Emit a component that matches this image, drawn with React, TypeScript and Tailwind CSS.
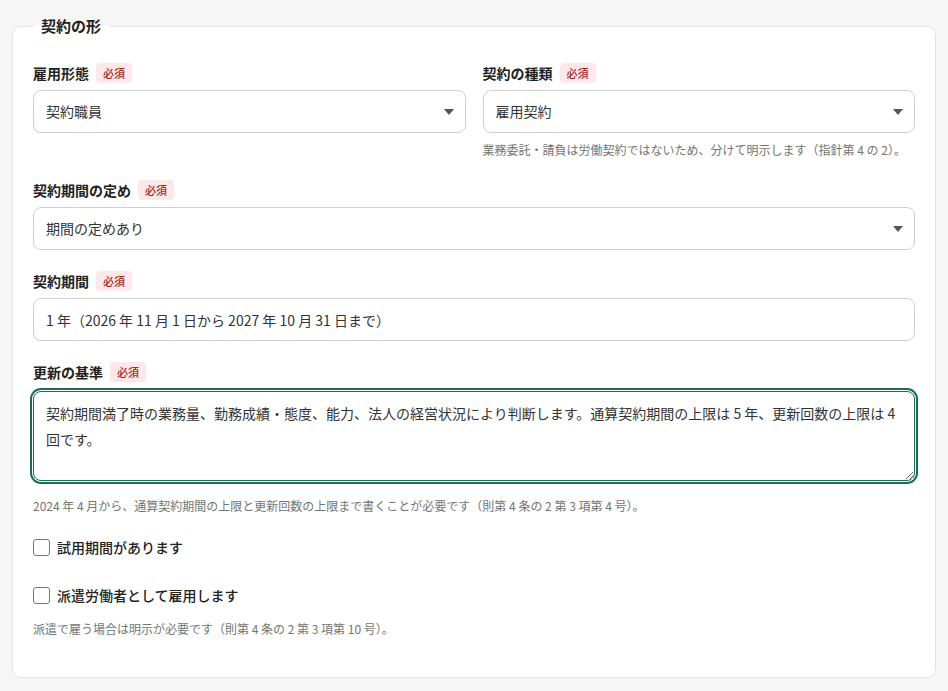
import { useState } from 'react';

const font = { fontFamily: '"Noto Sans CJK JP", "Noto Sans", sans-serif' };

function Required() {
  return (
    <span className="inline-flex h-5 items-center rounded-[4px] bg-[#fce8e8] px-[7px] text-[11px] font-medium text-[#a3262a]">
      必須
    </span>
  );
}

function Label({ text }: { text: string }) {
  return (
    <div className="flex h-5 items-center gap-[7px]">
      <span className="text-[14px] font-bold text-[#222]">{text}</span>
      <Required />
    </div>
  );
}

function Caret() {
  return (
    <svg
      className="pointer-events-none absolute right-[12px] top-1/2 -translate-y-1/2"
      width="10"
      height="6"
      viewBox="0 0 10 6"
    >
      <path d="M0 0 L10 0 L5 6 Z" fill="#555" />
    </svg>
  );
}

function Select({ value, options }: { value: string; options: string[] }) {
  const [v, setV] = useState(value);
  return (
    <div className="relative mt-[7px]">
      <select
        value={v}
        onChange={(e) => setV(e.target.value)}
        className="h-[43px] w-full appearance-none rounded-[8px] border border-[#cfd1cf] bg-white pl-[12px] pr-8 text-[14px] text-[#333] outline-none"
        style={font}
      >
        {options.map((o) => (
          <option key={o}>{o}</option>
        ))}
      </select>
      <Caret />
    </div>
  );
}

function Hint({ children, className = '' }: { children: React.ReactNode; className?: string }) {
  return <p className={`text-[12px] leading-[18px] text-[#737673] ${className}`}>{children}</p>;
}

function Check({ label }: { label: string }) {
  return (
    <label className="flex h-5 items-center gap-[7px]">
      <input
        type="checkbox"
        className="h-[17px] w-[17px] appearance-none rounded-[3px] border border-[#777] bg-white checked:bg-[#1a6e52]"
      />
      <span className="text-[14px] font-medium text-[#222]">{label}</span>
    </label>
  );
}

export default function App() {
  return (
    <div className="min-h-screen w-full bg-[#f5f6f5] px-3 pt-[15px] pb-3" style={font}>
      <fieldset className="rounded-[9px] border border-[#e2e4e2] bg-[#fefffe] px-5 pt-[26px] pb-[39px]">
        <legend className="px-2 text-[15px] font-bold leading-[22px] text-[#222]">契約の形</legend>

        <div className="flex flex-col gap-[21px]">
          {/* 雇用形態 / 契約の種類 */}
          <div className="grid grid-cols-2 gap-[17px]">
            <div>
              <Label text="雇用形態" />
              <Select value="契約職員" options={['正社員', '契約職員', 'パートタイム']} />
            </div>
            <div>
              <Label text="契約の種類" />
              <Select value="雇用契約" options={['雇用契約', '業務委託', '請負']} />
              <Hint className="mt-2">
                業務委託・請負は労働契約ではないため、分けて明示します（指針第 4 の 2）。
              </Hint>
            </div>
          </div>

          <div>
            <Label text="契約期間の定め" />
            <Select value="期間の定めあり" options={['期間の定めあり', '期間の定めなし']} />
          </div>

          <div>
            <Label text="契約期間" />
            <input
              defaultValue="1 年（2026 年 11 月 1 日から 2027 年 10 月 31 日まで）"
              className="mt-[7px] h-[43px] w-full rounded-[8px] border border-[#cfd1cf] bg-white px-[12px] text-[14px] text-[#333] outline-none"
              style={font}
            />
          </div>

          <div>
            <Label text="更新の基準" />
            <textarea
              defaultValue="契約期間満了時の業務量、勤務成績・態度、能力、法人の経営状況により判断します。通算契約期間の上限は 5 年、更新回数の上限は 4 回です。"
              className="mt-[9px] block h-[90px] w-full rounded-[8px] border border-[#1a6e52] bg-white px-[12px] py-[8px] text-[14px] leading-[26px] text-[#333] shadow-[0_0_0_1px_#fff,0_0_0_3px_#1a6e52] outline-none"
              style={font}
            />
            <Hint className="mt-[16px]">
              2024 年 4 月から、通算契約期間の上限と更新回数の上限まで書くことが必要です（則第 4 条の 2 第 3 項第 4 号）。
            </Hint>
          </div>

          <div className="mt-[1px]">
            <Check label="試用期間があります" />
          </div>

          <div className="mt-[7px]">
            <Check label="派遣労働者として雇用します" />
            <Hint className="mt-[15px]">派遣で雇う場合は明示が必要です（則第 4 条の 2 第 3 項第 10 号）。</Hint>
          </div>
        </div>
      </fieldset>
    </div>
  );
}
